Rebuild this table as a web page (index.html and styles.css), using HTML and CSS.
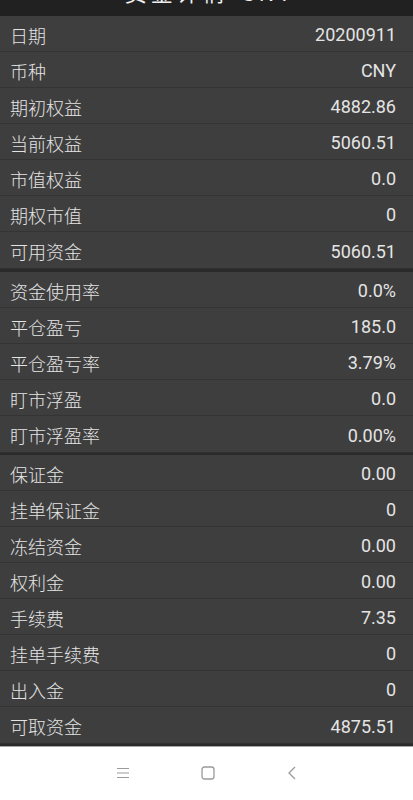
FILE: index.html
```html
<!DOCTYPE html>
<html>
<head>
<meta charset="utf-8">
<link rel="stylesheet" href="styles.css">
</head>
<body>
<div class="screen">
  <div class="header">
    <svg class="back" width="16" height="24" viewBox="0 0 16 24"><path d="M12 3 L4 12 L12 21" fill="none" stroke="#eee" stroke-width="2.2"/></svg>
    <div class="title">资金详情-CNY</div>
    <svg class="info" width="22" height="22" viewBox="0 0 22 22"><circle cx="11" cy="11" r="9" fill="none" stroke="#eee" stroke-width="1.8"/></svg>
  </div>
  <div class="group">
    <div class="row"><span class="label">日期</span><span class="value">20200911</span></div>
    <div class="row"><span class="label">币种</span><span class="value">CNY</span></div>
    <div class="row"><span class="label">期初权益</span><span class="value">4882.86</span></div>
    <div class="row"><span class="label">当前权益</span><span class="value">5060.51</span></div>
    <div class="row"><span class="label">市值权益</span><span class="value">0.0</span></div>
    <div class="row"><span class="label">期权市值</span><span class="value">0</span></div>
    <div class="row"><span class="label">可用资金</span><span class="value">5060.51</span></div>
  </div>
  <div class="divider thick"></div>
  <div class="group">
    <div class="row"><span class="label">资金使用率</span><span class="value">0.0%</span></div>
    <div class="row"><span class="label">平仓盈亏</span><span class="value">185.0</span></div>
    <div class="row"><span class="label">平仓盈亏率</span><span class="value">3.79%</span></div>
    <div class="row"><span class="label">盯市浮盈</span><span class="value">0.0</span></div>
    <div class="row"><span class="label">盯市浮盈率</span><span class="value">0.00%</span></div>
  </div>
  <div class="divider"></div>
  <div class="group">
    <div class="row"><span class="label">保证金</span><span class="value">0.00</span></div>
    <div class="row"><span class="label">挂单保证金</span><span class="value">0</span></div>
    <div class="row"><span class="label">冻结资金</span><span class="value">0.00</span></div>
    <div class="row"><span class="label">权利金</span><span class="value">0.00</span></div>
    <div class="row"><span class="label">手续费</span><span class="value">7.35</span></div>
    <div class="row"><span class="label">挂单手续费</span><span class="value">0</span></div>
    <div class="row"><span class="label">出入金</span><span class="value">0</span></div>
    <div class="row"><span class="label">可取资金</span><span class="value">4875.51</span></div>
  </div>
  <div class="divider bottom"></div>
  <div class="navbar">
    <svg width="14" height="12" viewBox="0 0 14 12"><path d="M1 1.5H13M1 6H13M1 10.5H13" stroke="#9a9a9a" stroke-width="1.1" fill="none"/></svg>
    <svg width="16" height="16" viewBox="0 0 16 16"><rect x="2" y="2" width="12" height="12" rx="2.5" fill="none" stroke="#9a9a9a" stroke-width="1.3"/></svg>
    <svg width="12" height="16" viewBox="0 0 12 16"><path d="M9 2 L3 8 L9 14" fill="none" stroke="#9a9a9a" stroke-width="1.3"/></svg>
  </div>
</div>
</body>
</html>
```
FILE: styles.css
```css
html, body {
  margin: 0;
  padding: 0;
  background: #ffffff;
}
.screen {
  width: 413px;
  height: 800px;
  overflow: hidden;
  display: flex;
  flex-direction: column;
  font-family: Roboto, "Noto Sans CJK SC", sans-serif;
}
.header {
  height: 56px;
  margin-top: -40px;
  background: #212121;
  display: flex;
  align-items: center;
  padding: 0 12px 0 14px;
  box-sizing: border-box;
  flex-shrink: 0;
}
.back { flex-shrink: 0; margin-top: 2px; }
.title {
  flex: 1;
  text-align: center;
  color: #f0f0f0;
  font-size: 22px;
  letter-spacing: 4px;
  padding-left: 10px;
  margin-top: 6px;
  font-family: "Noto Sans CJK SC", sans-serif;
}
.info { flex-shrink: 0; margin-top: 2px; }
.group {
  display: flex;
  flex-direction: column;
  background: #3e3e3e;
}
.row {
  height: 36px;
  box-sizing: border-box;
  display: flex;
  align-items: center;
  justify-content: space-between;
  padding: 2px 17px 0 10px;
  border-bottom: 1px solid #343434;
  color: #e4e4e4;
  font-size: 18px;
}
.row:last-child { border-bottom: none; }
.label {
  font-family: "Noto Sans CJK SC", sans-serif;
  font-weight: 300;
}
.value {
  font-family: Roboto, sans-serif;
}
.divider {
  height: 3px;
  background: #2a2a2a;
  border-top: 1px solid #303030;
  box-sizing: border-box;
  flex-shrink: 0;
}
.divider.thick { height: 4px; }
.divider.bottom {
  height: 4px;
  border-bottom: 1px solid #a8a8a8;
}
.navbar {
  flex: 1;
  background: #ffffff;
  display: flex;
  align-items: center;
  justify-content: center;
  gap: 70px;
  padding-bottom: 2px;
}
```
